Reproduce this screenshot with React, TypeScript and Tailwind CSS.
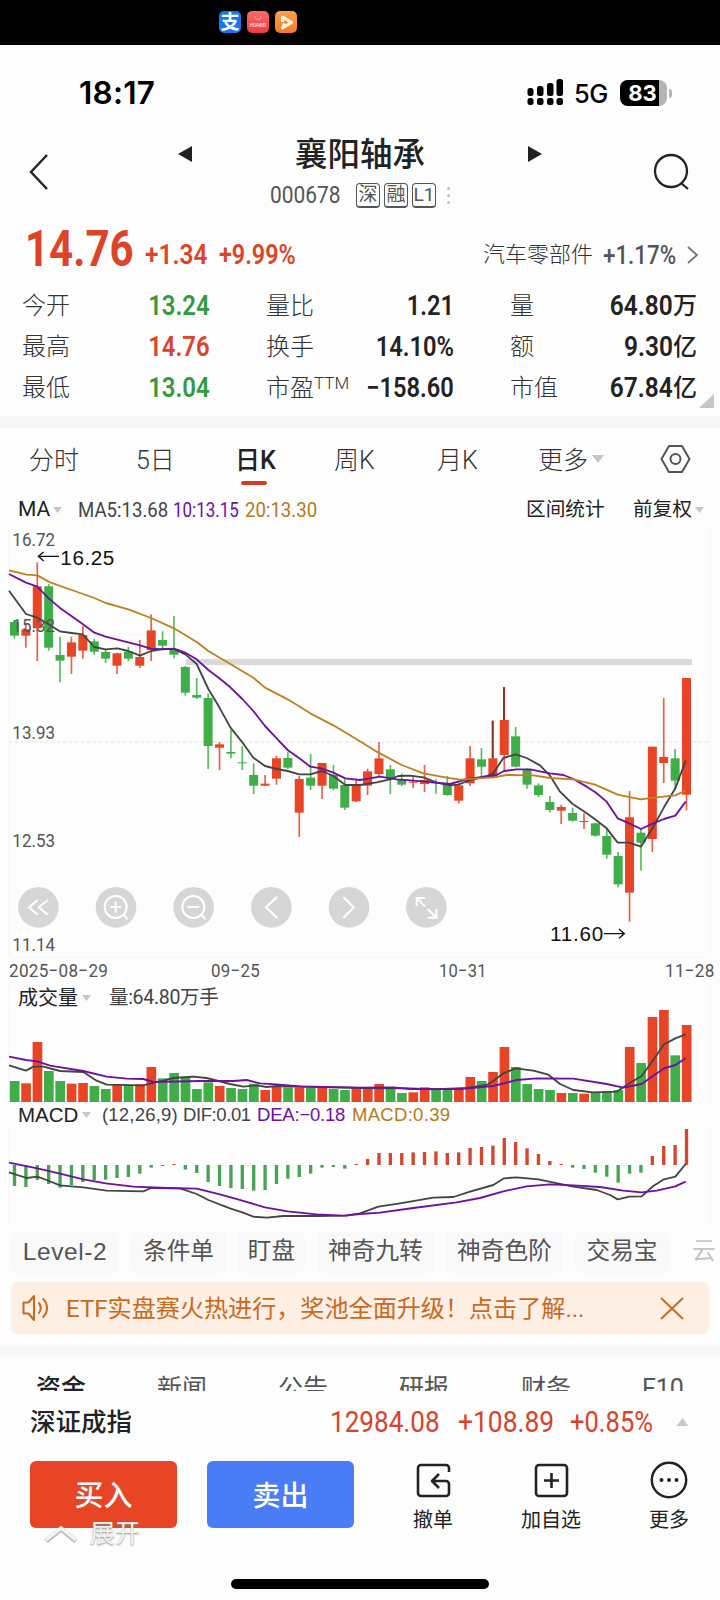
import React from 'react';

type Tone = 'r' | 'g';
type Candle = [Tone, number, number, number, number];
type Bar = [Tone, number];

const RED = '#e84526';
const GREEN = '#3fae49';
const INK = '#444444';
const PURPLE = '#6f109f';
const GOLD = '#bf8020';

const candleX = (i: number) => 43.5 + 34.17 * i;

// tone, high, body top, body bottom, low
const candles: Candle[] = [
  ['g', 300, 306, 347, 355],
  ['r', 310, 328, 347, 383],
  ['r', 127, 199, 325, 423],
  ['g', 192, 199, 383, 392],
  ['g', 350, 405, 422, 487],
  ['r', 350, 367, 410, 462],
  ['r', 318, 345, 392, 416],
  ['g', 357, 364, 395, 404],
  ['g', 390, 396, 416, 429],
  ['r', 398, 400, 437, 462],
  ['g', 380, 395, 416, 423],
  ['r', 360, 411, 437, 444],
  ['r', 283, 331, 390, 423],
  ['g', 334, 360, 377, 385],
  ['g', 288, 387, 404, 415],
  ['g', 438, 441, 518, 527],
  ['g', 474, 525, 533, 537],
  ['g', 520, 534, 678, 747],
  ['r', 666, 673, 683, 750],
  ['g', 630, 696, 701, 715],
  ['g', 678, 727, 729, 750],
  ['g', 730, 765, 797, 822],
  ['r', 765, 791, 797, 798],
  ['r', 707, 715, 776, 794],
  ['g', 695, 714, 743, 747],
  ['r', 768, 777, 878, 951],
  ['g', 702, 773, 797, 810],
  ['r', 729, 729, 797, 837],
  ['g', 735, 765, 806, 810],
  ['g', 778, 795, 863, 870],
  ['r', 780, 798, 844, 846],
  ['r', 746, 754, 797, 825],
  ['r', 666, 715, 762, 768],
  ['g', 735, 748, 775, 822],
  ['g', 760, 777, 794, 798],
  ['r', 768, 785, 788, 804],
  ['r', 735, 780, 792, 816],
  ['g', 778, 787, 789, 821],
  ['g', 768, 790, 825, 827],
  ['r', 790, 796, 842, 850],
  ['r', 678, 715, 790, 798],
  ['g', 684, 718, 740, 770],
  ['r', 602, 715, 773, 775],
  ['r', 501, 600, 705, 755],
  ['g', 621, 649, 740, 742],
  ['g', 745, 748, 794, 806],
  ['g', 790, 796, 825, 831],
  ['g', 828, 846, 870, 878],
  ['r', 854, 861, 872, 912],
  ['g', 863, 879, 902, 905],
  ['r', 880, 903, 906, 927],
  ['g', 908, 910, 947, 950],
  ['g', 925, 948, 1004, 1016],
  ['g', 996, 1008, 1093, 1102],
  ['r', 813, 892, 1118, 1205],
  ['g', 925, 938, 968, 1052],
  ['r', 680, 680, 957, 996],
  ['r', 534, 711, 729, 789],
  ['g', 687, 715, 782, 810],
  ['r', 474, 474, 824, 871],
];

const volumes: Bar[] = [
  ['g', 393], ['r', 400], ['r', 276], ['g', 363], ['g', 393], ['r', 401],
  ['r', 399], ['g', 408], ['g', 417], ['r', 405], ['g', 405], ['r', 403],
  ['r', 351], ['g', 385], ['g', 369], ['g', 380], ['g', 417], ['g', 397],
  ['r', 408], ['g', 414], ['g', 417], ['g', 401], ['r', 420], ['r', 408],
  ['g', 412], ['r', 412], ['g', 412], ['r', 412], ['g', 417], ['g', 420],
  ['r', 415], ['r', 417], ['r', 402], ['g', 414], ['g', 429], ['r', 427],
  ['r', 412], ['g', 420], ['g', 418], ['r', 417], ['r', 381], ['g', 393],
  ['r', 366], ['r', 291], ['g', 351], ['g', 402], ['g', 417], ['g', 420],
  ['r', 429], ['g', 429], ['r', 431], ['g', 429], ['g', 425], ['g', 420],
  ['r', 291], ['g', 339], ['r', 201], ['r', 180], ['g', 316], ['r', 225],
];

// end of each histogram stick; above 645 is positive
const macd = [
  708, 711, 690, 702, 713, 705, 696, 691, 689, 684, 681, 671, 653, 648, 642,
  659, 669, 696, 708, 714, 717, 722, 720, 702, 686, 681, 671, 653, 651, 656,
  642, 627, 609, 609, 609, 607, 606, 604, 609, 607, 594, 591, 587, 564, 576,
  595, 612, 633, 642, 653, 657, 668, 680, 698, 671, 668, 618, 588, 585, 537,
];

const ma5 =
  '27,212 78,282 112,293 146,313 179,334 215,339 248,343 283,381 317,388 352,385 385,393 420,407 453,393 488,387 522,387 556,403 590,432 625,507 658,562 691,622 727,667 760,713 795,738 830,747 863,753 898,763 931,763 966,753 1000,768 1036,795 1080,795 1130,787 1170,778 1195,768 1230,767 1270,772 1310,788 1350,796 1375,794 1410,780 1460,768 1480,760 1510,714 1547,703 1580,714 1620,736 1650,767 1680,815 1718,852 1755,876 1785,898 1820,925 1853,968 1888,968 1923,980 1960,920 1992,862 2026,805 2057,722';
const ma10 =
  '27,162 78,188 112,200 146,235 179,263 248,312 283,338 317,350 420,376 453,386 488,388 522,386 556,398 590,418 625,450 658,475 691,502 727,537 760,573 795,618 830,655 863,690 898,715 931,740 966,746 1000,758 1036,775 1080,780 1140,770 1190,778 1270,784 1350,792 1410,775 1460,770 1490,765 1512,753 1550,748 1590,748 1650,760 1690,765 1720,777 1760,800 1785,816 1820,845 1853,895 1888,910 1923,927 1960,910 1992,897 2026,887 2057,845';
const ma20 =
  '27,151 80,164 112,166 150,187 215,210 283,234 317,249 385,268 453,294 522,325 590,366 625,393 691,432 760,473 795,503 863,538 931,580 1000,616 1080,664 1130,695 1205,735 1270,760 1340,773 1380,779 1480,772 1520,765 1600,766 1650,774 1720,778 1785,794 1853,824 1923,838 1960,833 2026,826 2057,812';
const vol5 =
  '27,346 78,362 100,350 130,350 180,363 250,366 290,392 320,404 430,406 453,400 490,392 520,384 580,380 620,384 690,402 730,410 770,406 800,411 830,408 900,410 1080,414 1230,415 1300,418 1400,414 1460,405 1480,393 1510,370 1547,355 1600,362 1645,374 1680,402 1720,420 1780,427 1850,425 1888,400 1925,378 1960,330 1992,283 2026,265 2057,253';
const vol10 =
  '27,320 78,330 112,334 150,347 250,363 320,380 380,386 430,387 460,396 600,393 700,393 740,390 780,400 830,403 900,409 1080,413 1180,412 1230,417 1380,417 1480,408 1550,390 1610,385 1720,386 1820,402 1870,413 1925,402 1960,377 1992,355 2026,345 2057,325';
const dif =
  '27,667 80,684 112,680 140,690 180,706 250,712 320,722 430,724 453,714 540,715 590,732 625,750 690,775 727,787 760,800 800,803 850,798 950,798 1040,797 1080,790 1135,770 1200,760 1300,743 1360,741 1410,725 1480,705 1512,685 1550,682 1615,688 1720,710 1790,720 1830,735 1853,748 1888,740 1925,739 1960,708 1992,688 2026,680 2057,642';
const dea =
  '27,638 112,655 180,671 250,688 317,700 400,710 500,714 590,716 660,733 727,752 795,772 863,784 950,793 1030,797 1080,792 1140,788 1240,774 1370,757 1440,744 1510,724 1580,709 1650,703 1720,706 1800,711 1870,722 1925,727 1970,722 2026,709 2057,695';

const Line: React.FC<{ points: string; color: string }> = ({ points, color }) => (
  <polyline
    points={points}
    fill="none"
    stroke={color}
    strokeWidth={5.5}
    strokeLinejoin="round"
  />
);

const Caret: React.FC<{ className?: string }> = ({ className }) => (
  <svg className={className} viewBox="0 0 12 8" fill="#c4c6c8">
    <path d="M0 0h12L6 8z" />
  </svg>
);

const priceLabels: [string, number][] = [
  ['16.72', 79],
  ['15.32', 335],
  ['13.93', 657],
  ['12.53', 980],
  ['11.14', 1292],
];

const toolIcons = [
  <path d="M113 481 87 502l26 22M143 481 116 502l27 22" key="rewind" />,
  <g key="in">
    <circle cx="347" cy="501" r="33" />
    <path d="M331 501h33M347 485v33M371 524l12 14" />
  </g>,
  <g key="out">
    <circle cx="580" cy="501" r="33" />
    <path d="M562 501h36M604 524l12 14" />
  </g>,
  <path d="M831 471 798 502l33 32" key="prev" />,
  <path d="M1030 471 1061 502l-31 32" key="next" />,
  <path d="M1275 474h-25v25M1252 476l23 23M1283 507l25 25M1309 507v26h-26" key="full" />,
];
const toolCenters = [115, 348, 581, 814, 1047, 1279];

const PriceChart: React.FC = () => (
  <svg className="block h-[428px] w-[720px] shrink-0" viewBox="0 30 2160 1284">
    <path d="M27 30V1310M2130 30V1310" stroke="#f3f4f4" strokeWidth={3} />
    <path d="M27 1311H2130M330 344H560" stroke="#f7f7f7" strokeWidth={3} />
    <path d="M27 666H2130" stroke="#e2e2e2" strokeWidth={3} strokeDasharray="10 8" />
    <rect x="557" y="417" width="1519" height="18" fill="#d9d9d9" />
    {candles.map(([tone, high, top, bottom, low], i) => {
      const color = tone === 'r' ? RED : GREEN;
      return (
        <g key={i} fill={color}>
          <rect x={candleX(i) - 2.5} y={high} width={5} height={low - high} opacity={0.85} />
          <rect x={candleX(i) - 13.5} y={top} width={27} height={Math.max(bottom - top, 3)} />
        </g>
      );
    })}
    <path d="M1512 501V600M1478 602V715" stroke="#8a3a24" strokeWidth={6} />
    <Line points={ma5} color={INK} />
    <Line points={ma10} color={PURPLE} />
    <Line points={ma20} color={GOLD} />
    <g fill="#555" fontSize={56} fontFamily="Roboto, sans-serif">
      {priceLabels.map(([label, y]) => (
        <text key={label} x={37} y={y} textLength={128} lengthAdjust="spacingAndGlyphs">
          {label}
        </text>
      ))}
    </g>
    <g fill="#111" fontSize={62} fontFamily="Liberation Sans, sans-serif">
      <text x={181} y={135} textLength={162}>16.25</text>
      <text x={1650} y={1263} textLength={160}>11.60</text>
    </g>
    <g fill="none" stroke="#111" strokeWidth={4}>
      <path d="M177 109H115M131 96 115 109l16 14" />
      <path d="M1812 1241H1873M1857 1227 1873 1241l-16 14" />
    </g>
    <g transform="translate(0 660)">
      {toolCenters.map((cx) => (
        <circle key={cx} cx={cx} cy={502} r={61} fill="#d6d6d6" />
      ))}
      <g fill="none" stroke="#fff" strokeWidth={6}>
        {toolIcons}
      </g>
    </g>
  </svg>
);

const VolumeChart: React.FC = () => (
  <svg className="block h-[92px] w-[720px] shrink-0 overflow-visible" viewBox="0 180 2160 276">
    <path d="M27 100V456M2130 100V456" stroke="#f3f4f4" strokeWidth={3} />
    {volumes.map(([tone, top], i) => (
      <rect
        key={i}
        x={candleX(i) - 14}
        y={top}
        width={29}
        height={456 - top}
        fill={tone === 'r' ? RED : GREEN}
      />
    ))}
    <Line points={vol5} color={INK} />
    <Line points={vol10} color={PURPLE} />
  </svg>
);

const MacdChart: React.FC = () => (
  <svg className="block h-[94px] w-[720px] shrink-0" viewBox="0 534 2160 282">
    <path d="M27 534V816M2130 534V816" stroke="#f3f4f4" strokeWidth={3} />
    {macd.map((end, i) => (
      <rect
        key={i}
        x={candleX(i) - 5}
        y={Math.min(end, 645)}
        width={10}
        height={Math.abs(end - 645)}
        fill={end < 645 ? '#d4472f' : '#4aa354'}
      />
    ))}
    <Line points={dif} color={INK} />
    <Line points={dea} color={PURPLE} />
  </svg>
);

const StatusBar: React.FC = () => (
  <div className="flex h-[85px] items-center pt-[11px] pl-[79px] text-black">
    <span className="w-[447px] font-[Inter] text-[31.5px] font-semibold tracking-[0.2px]">
      18:17
    </span>
    <svg className="h-[28px] w-[38px]" viewBox="0 0 38 28" fill="#000">
      <rect x="1.5" y="9" width="6" height="8" rx="2.5" />
      <rect x="11" y="7" width="6.5" height="10" rx="2.5" />
      <rect x="21" y="4" width="6.5" height="13" rx="2.5" />
      <rect x="30.5" y="0" width="6.5" height="17" rx="2.5" />
      <rect x="1.5" y="19" width="6" height="7" rx="2.5" />
      <rect x="11" y="19" width="6.5" height="7" rx="2.5" />
      <rect x="21" y="19" width="6.5" height="7" rx="2.5" />
      <rect x="30.5" y="19" width="6.5" height="7" rx="2.5" />
    </svg>
    <span className="ml-[10px] w-[46px] pt-[2px] font-[Inter] text-[25.5px] font-medium tracking-[-0.5px]">
      5G
    </span>
    <div className="flex h-[26px] w-[47px] items-center rounded-[8px] bg-[#b4b4b4]">
      <div className="flex h-full w-[39px] items-center justify-center rounded-l-[8px] bg-black pl-[6px] font-[Inter] text-[22px] leading-[26px] font-bold text-white">
        83
      </div>
    </div>
    <div className="ml-[2px] h-[9px] w-[3px] rounded-r-full bg-[#b4b4b4]" />
  </div>
);

const Header: React.FC = () => (
  <div className="flex h-[85px]">
    <svg className="mt-[24px] ml-[28px] h-[36px] w-[22px]" viewBox="0 0 22 36" fill="none" stroke="#222" strokeWidth="2.4">
      <path d="M19 1 3 18l16 17" />
    </svg>
    <svg className="mt-[16px] ml-[128px] h-[16px] w-[14px]" viewBox="0 0 14 16" fill="#222">
      <path d="M14 0v16L0 8z" />
    </svg>
    <div className="flex w-[336px] flex-col items-center">
      <h1 className="mt-[4px] text-[32.5px] leading-[42px] font-medium text-[#222]">襄阳轴承</h1>
      <div className="mt-[6px] flex h-[26px] items-center text-[#555]">
        <span className="flex w-[86px] items-center">
          <span className="inline-block origin-left scale-x-[0.87] text-[24px]">000678</span>
        </span>
        <div className="flex gap-[4px] text-[19px] leading-[22px]">
          {['深', '融', 'L1'].map((tag) => (
            <span
              key={tag}
              className="flex h-[25px] w-[24px] items-center justify-center rounded-[4px] border border-b-2 border-[#555]"
            >
              {tag}
            </span>
          ))}
        </div>
        <div className="ml-[11px] flex flex-col gap-[4px]">
          {[0, 1, 2].map((dot) => (
            <span key={dot} className="h-[3px] w-[3px] rounded-full bg-[#bbb]" />
          ))}
        </div>
      </div>
    </div>
    <svg className="mt-[16px] h-[16px] w-[14px]" viewBox="0 0 14 16" fill="#222">
      <path d="M0 0v16l14-8z" />
    </svg>
    <svg className="mt-[23px] ml-[111px] h-[38px] w-[38px]" viewBox="0 0 38 38" fill="none" stroke="#222" strokeWidth="2.3">
      <circle cx="18" cy="18" r="16" />
      <path d="m28 30 7 6" />
    </svg>
  </div>
);

const stats = [
  ['今开', '13.24', 'text-[#339a3e]', '量比', '1.21', '量', '64.80', '万'],
  ['最高', '14.76', 'text-[#dd4328]', '换手', '14.10%', '额', '9.30', '亿'],
  ['最低', '13.04', 'text-[#339a3e]', '市盈', '−158.60', '市值', '67.84', '亿'],
];

const Quote: React.FC = () => (
  <div className="h-[201px]">
    <div className="flex h-[70px] pt-[9px] whitespace-nowrap text-[#dd4328]">
      <span className="ml-[25px] w-[120px] text-[50px] leading-[51px] font-bold">
        <span className="inline-block origin-left scale-x-[0.84]">14.76</span>
      </span>
      <span className="w-[74px] pt-[10px] text-[27.5px] leading-[42px] font-semibold">
        <span className="inline-block origin-left scale-x-[0.89]">+1.34</span>
      </span>
      <span className="w-[264px] pt-[10px] text-[27.5px] leading-[42px] font-semibold">
        <span className="inline-block origin-left scale-x-[0.85]">+9.99%</span>
      </span>
      <span className="w-[120px] pt-[13px] text-[22px] leading-[36px] font-light text-[#333]">
        汽车零部件
      </span>
      <span className="w-[84px] pt-[10px] text-[26px] leading-[42px] font-medium text-[#555]">
        <span className="inline-block origin-left scale-x-[0.86]">+1.17%</span>
      </span>
      <svg className="mt-[22px] h-[18px] w-[12px]" viewBox="0 0 12 18" fill="none" stroke="#777" strokeWidth="1.8">
        <path d="m1 1 9 8-9 8" />
      </svg>
    </div>
    <div className="relative">
      {stats.map(([a, av, tone, b, bv, c, cv, unit]) => (
        <div
          key={a}
          className="flex h-[41px] items-center pl-[22px] text-[24px] font-light whitespace-nowrap text-[#333]"
        >
          <span className="w-[66px]">{a}</span>
          <span className={`flex w-[122px] justify-end pt-[1px] text-[27.5px] font-semibold ${tone}`}>
            <span className="inline-block origin-right scale-x-[0.87]">{av}</span>
          </span>
          <span className="ml-[56px] flex w-[88px]">
            {b}
            {b === '市盈' && <span className="mt-[4px] text-[17px] leading-[18px]">TTM</span>}
          </span>
          <span className="flex w-[100px] justify-end pt-[1px] text-[27.5px] font-semibold text-[#222]">
            <span className="inline-block origin-right scale-x-[0.86]">{bv}</span>
          </span>
          <span className="ml-[56px] w-[60px]">{c}</span>
          <span className="flex w-[103px] justify-end pt-[1px] text-[27.5px] font-semibold text-[#222]">
            <span className="inline-block origin-right scale-x-[0.89]">{cv}</span>
          </span>
          <span className="w-[26px] pt-[1px] font-medium text-[#222]">{unit}</span>
        </div>
      ))}
      <svg className="absolute right-[6px] bottom-0 h-[14px] w-[15px]" viewBox="0 0 15 14" fill="#c6c6c6">
        <path d="M15 0v14H0z" />
      </svg>
    </div>
  </div>
);

const Periods: React.FC = () => (
  <div className="flex h-[62px] items-center pt-[3px] pl-[29px] text-[25px] font-light whitespace-nowrap text-[#333]">
    <span className="w-[107px]">分时</span>
    <span className="w-[99px]">5日</span>
    <span className="relative w-[99px] font-medium text-[#222]">
      日K
      <span className="absolute -bottom-[6px] left-[6px] h-[4px] w-[26px] rounded-sm bg-[#d23c24]" />
    </span>
    <span className="w-[103px]">周K</span>
    <span className="w-[101px]">月K</span>
    <span>更多</span>
    <Caret className="mb-[3px] ml-[4px] h-[8px] w-[12px]" />
    <svg className="mb-[4px] ml-[56px] h-[30px] w-[31px]" viewBox="0 0 31 30" fill="none" stroke="#555" strokeWidth="2">
      <path d="M9 2h13l7.5 13L22 28H9L1.5 15z" strokeLinejoin="round" />
      <circle cx="15.5" cy="15" r="5" />
    </svg>
  </div>
);

const IndicatorRow: React.FC = () => (
  <div className="flex h-[40px] items-center pl-[18px] text-[20px] whitespace-nowrap">
    <span className="w-[35px] text-[21px] text-[#222]">MA</span>
    <Caret className="h-[6px] w-[9px]" />
    <span className="ml-[16px] w-[95px]">
      <span className="inline-block origin-left scale-x-[0.93] text-[#444]">MA5:13.68</span>
    </span>
    <span className="w-[72px]">
      <span className="inline-block origin-left scale-x-[0.85] text-[#6f109f]">10:13.15</span>
    </span>
    <span className="w-[281px]">
      <span className="inline-block origin-left scale-x-[0.93] text-[#b47a1a]">20:13.30</span>
    </span>
    <span className="w-[107px] text-[19.7px] text-[#222]">区间统计</span>
    <span className="text-[19.7px] text-[#222]">前复权</span>
    <Caret className="ml-[3px] h-[6px] w-[9px]" />
  </div>
);

const chips: [string, string][] = [
  ['条件单', 'w-[95px]'],
  ['盯盘', 'w-[67px]'],
  ['神奇九转', 'w-[117px]'],
  ['神奇色阶', 'w-[117px]'],
  ['交易宝', 'w-[94px]'],
];

const Chips: React.FC = () => (
  <div className="flex h-[60px] items-center gap-[12px] pl-[11px] text-[23.7px] whitespace-nowrap text-[#555]">
    <span className="flex h-[41px] w-[108px] shrink-0 items-center justify-center rounded-md bg-[#f9f9fa] font-['Liberation_Sans',sans-serif] text-[24.5px] tracking-[0.6px]">
      Level-2
    </span>
    {chips.map(([label, width]) => (
      <span
        key={label}
        className={`flex h-[41px] shrink-0 items-center justify-center rounded-md bg-[#f9f9fa] ${width}`}
      >
        {label}
      </span>
    ))}
    <span className="ml-[11px] shrink-0 text-[#c4c4c4]">云</span>
  </div>
);

const Notice: React.FC = () => (
  <div className="mx-[11px] flex h-[52px] items-center rounded-md bg-[#fdefe3] text-[#c96a1e]">
    <svg className="ml-[11px] h-[28px] w-[30px] shrink-0" viewBox="0 0 30 28" fill="none" stroke="#c96a1e" strokeWidth="2">
      <path d="M1.5 8.5h5L12 2v24l-5.5-6.5h-5z" strokeLinejoin="round" />
      <path d="M16.5 8.5c3 3 3 8 0 11M20.5 4.5c6 5 6 14 0 19" />
    </svg>
    <span className="ml-[14px] w-[594px] shrink-0 pt-[3px] text-[24.1px] whitespace-nowrap">
      ETF实盘赛火热进行，奖池全面升级！点击了解...
    </span>
    <svg className="h-[23px] w-[24px] shrink-0" viewBox="0 0 24 23" fill="none" stroke="#c96a1e" strokeWidth="2">
      <path d="m1 1 22 21M23 1 1 22" />
    </svg>
  </div>
);

const InfoTabs: React.FC = () => (
  <div className="flex h-[35px] overflow-hidden pt-[14px] pl-[36px] text-[25px] leading-[38px] whitespace-nowrap text-[#555]">
    <span className="w-[121px] font-medium text-[#222]">资金</span>
    <span className="w-[121px]">新闻</span>
    <span className="w-[121px]">公告</span>
    <span className="w-[122px]">研报</span>
    <span className="w-[121px]">财务</span>
    <span>F10</span>
  </div>
);

const Footer: React.FC = () => (
  <div className="relative h-[209px] bg-[#fdfdfd]">
    <div className="flex h-[62px] items-center whitespace-nowrap">
      <span className="ml-[30px] w-[300px] text-[25.5px] font-medium text-[#222]">深证成指</span>
      <span className="w-[128px] pt-[2px] text-[29px] text-[#d8432a]">
        <span className="inline-block origin-left scale-x-[0.9]">12984.08</span>
      </span>
      <span className="w-[112px] pt-[2px] text-[29px] text-[#d8432a]">
        <span className="inline-block origin-left scale-x-[0.91]">+108.89</span>
      </span>
      <span className="w-[106px] pt-[2px] text-[29px] text-[#d8432a]">
        <span className="inline-block origin-left scale-x-[0.88]">+0.85%</span>
      </span>
      <Caret className="h-[8px] w-[13px] rotate-180" />
    </div>
    <div className="flex h-[126px] pt-[8px] pl-[30px]">
      <button className="flex h-[67px] w-[147px] items-center justify-center rounded-[6px] bg-[#e84526] pt-[4px] text-[29px] font-medium text-white">
        买入
      </button>
      <button className="ml-[30px] flex h-[67px] w-[147px] items-center justify-center rounded-[6px] bg-[#4a7cf5] pt-[4px] text-[28px] font-medium text-white">
        卖出
      </button>
      <div className="ml-[49px] flex w-[60px] flex-col items-center text-[20px] leading-[28px] text-[#222]">
        <svg className="mt-[2px] h-[35px] w-[35px]" viewBox="0 0 35 35" fill="none" stroke="#222" strokeWidth="2.6" strokeLinejoin="round">
          <path d="M33 9V5a3 3 0 0 0-3-3H5a3 3 0 0 0-3 3v25a3 3 0 0 0 3 3h25a3 3 0 0 0 3-3V21a3 3 0 0 0-3-3H17M23 11l-7 7 7 7" />
        </svg>
        <span className="mt-[8px]">撤单</span>
      </div>
      <div className="ml-[58px] flex w-[60px] flex-col items-center text-[20px] leading-[28px] text-[#222]">
        <svg className="mt-[2px] h-[35px] w-[35px]" viewBox="0 0 35 35" fill="none" stroke="#222" strokeWidth="2.6">
          <rect x="2" y="2" width="31" height="31" rx="3" />
          <path d="M17.5 10v15M10 17.5h15" />
        </svg>
        <span className="mt-[8px] whitespace-nowrap">加自选</span>
      </div>
      <div className="ml-[58px] flex w-[60px] flex-col items-center text-[20px] leading-[28px] text-[#222]">
        <svg className="h-[38px] w-[38px]" viewBox="0 0 38 38" fill="none" stroke="#222" strokeWidth="2.4">
          <circle cx="19" cy="19" r="17.2" />
          <g fill="#222" stroke="none">
            <circle cx="11.5" cy="19" r="2" />
            <circle cx="19" cy="19" r="2" />
            <circle cx="26.5" cy="19" r="2" />
          </g>
        </svg>
        <span className="mt-[7px]">更多</span>
      </div>
    </div>
    <div className="absolute top-[124px] left-[44px] flex items-center text-[25px] text-[#f4f4f4] [text-shadow:0_1px_2px_#888]">
      <svg className="mr-[12px] h-[20px] w-[34px]" viewBox="0 0 34 20" fill="none">
        <path d="M2 17 17 5l15 12" stroke="#bbb" strokeWidth="5" />
        <path d="M2 16 17 4l15 12" stroke="#f4f4f4" strokeWidth="3.5" />
      </svg>
      展开
    </div>
    <div className="mx-auto h-[10px] w-[258px] rounded-full bg-black" />
  </div>
);

export default function App() {
  return (
    <div className="flex h-[1600px] w-[720px] flex-col overflow-hidden bg-[#fdfdfd] font-[Roboto,'Noto_Sans_CJK_SC',sans-serif]">
      <div className="flex h-[45px] gap-[6px] bg-black pt-[11px] pl-[219px]">
        <div className="flex h-[22px] w-[22px] items-center justify-center rounded-[5px] bg-[#1677ee] text-[19px] leading-none font-bold text-white">
          支
        </div>
        <div className="flex h-[22px] w-[22px] flex-col items-center justify-center rounded-[5px] bg-gradient-to-b from-[#fb6a68] to-[#ee3948] text-[4.5px] leading-none text-white">
          <svg className="h-[6px] w-[8px]" viewBox="0 0 8 6" fill="none" stroke="#ffc4c4" strokeWidth="0.8">
            <path d="M1 0c0 5 6 5 6 0" />
          </svg>
          <span className="mt-[2px]">HUAWEI</span>
        </div>
        <div className="flex h-[22px] w-[22px] items-center justify-center rounded-[5px] bg-gradient-to-b from-[#faa04b] to-[#f47a2c]">
          <svg className="h-[15px] w-[15px]" viewBox="0 0 15 15" fill="none" stroke="#fff3e2" strokeWidth="3" strokeLinejoin="round">
            <path d="M3.5 7V2l9 5.5-9 5.5 2-4.5" />
          </svg>
        </div>
      </div>
      <StatusBar />
      <Header />
      <Quote />
      <div className="h-[12px] bg-[#f6f6f6]" />
      <Periods />
      <IndicatorRow />
      <PriceChart />
      <div className="flex h-[26px] items-center text-[19px] tracking-[0.3px] whitespace-nowrap text-[#555]">
        <span className="ml-[9px] w-[203px]">
          <span className="inline-block origin-left scale-x-[0.9]">2025−08−29</span>
        </span>
        <span className="w-[229px]">
          <span className="inline-block origin-left scale-x-[0.89]">09−25</span>
        </span>
        <span className="w-[227px]">
          <span className="inline-block origin-left scale-x-[0.87]">10−31</span>
        </span>
        <span className="inline-block origin-left scale-x-[0.9]">11−28</span>
      </div>
      <div className="flex h-[26px] items-center pt-[2px] text-[20px] whitespace-nowrap">
        <span className="ml-[18px] w-[64px] text-[#222]">成交量</span>
        <Caret className="h-[6px] w-[9px]" />
        <span className="ml-[18px] text-[19.5px] tracking-[-0.3px] text-[#444]">量:64.80万手</span>
      </div>
      <VolumeChart />
      <div className="flex h-[26px] items-center font-['Liberation_Sans',sans-serif] text-[18.5px] whitespace-nowrap">
        <span className="ml-[18px] w-[64px] text-[20.5px] text-[#222]">MACD</span>
        <Caret className="h-[6px] w-[9px]" />
        <span className="ml-[11px] w-[81px] tracking-[0.2px] text-[#444]">(12,26,9)</span>
        <span className="w-[74px] tracking-[-0.4px] text-[#444]">DIF:0.01</span>
        <span className="w-[95px] tracking-[-0.2px] text-[#6f109f]">DEA:−0.18</span>
        <span className="tracking-[0.3px] text-[#b47a1a]">MACD:0.39</span>
      </div>
      <MacdChart />
      <Chips />
      <Notice />
      <div className="mt-[11px] h-[11px] bg-[#f7f8f8]" />
      <InfoTabs />
      <Footer />
    </div>
  );
}
